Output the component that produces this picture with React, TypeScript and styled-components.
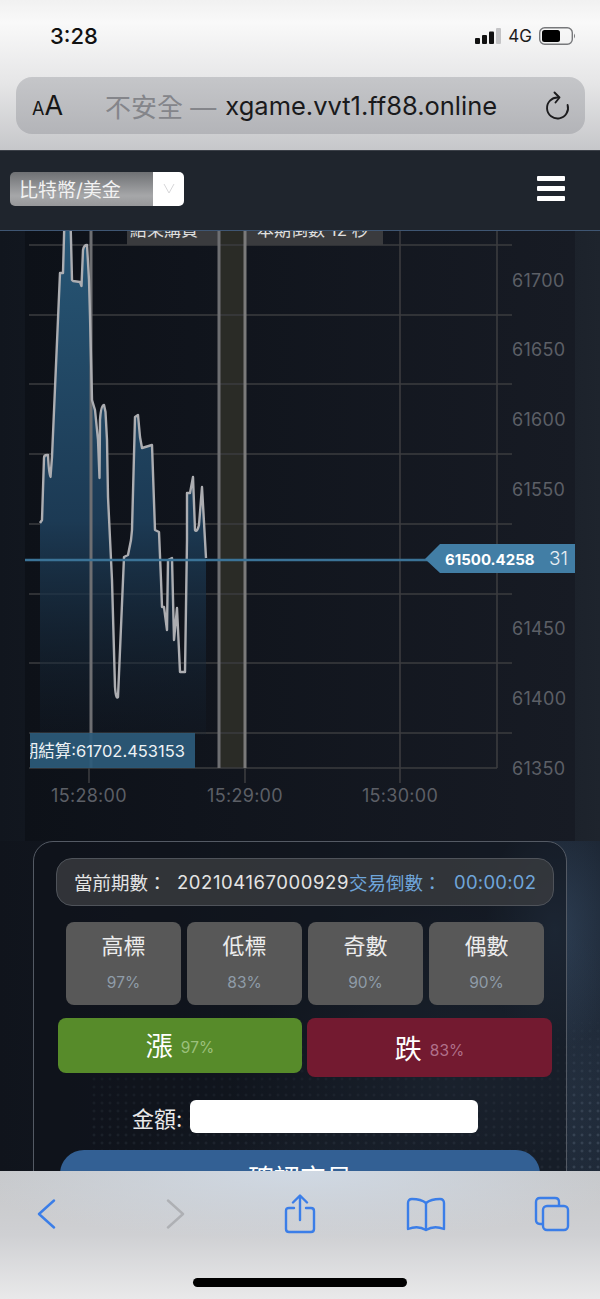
import React from 'react';
import styled, { createGlobalStyle } from 'styled-components';

const FONT = 'Inter, "Noto Sans CJK TC", sans-serif';

const GlobalStyle = createGlobalStyle`
    html, body {
        margin: 0;
        padding: 0;
        background: #14181f;
    }
    * {
        box-sizing: border-box;
    }
`;

const Page = styled.div`
    width: 600px;
    height: 1299px;
    display: flex;
    flex-direction: column;
    overflow: hidden;
    font-family: ${FONT};
`;

/* safari chrome, top */
const BrowserTop = styled.div`
    height: 150px;
    flex-shrink: 0;
    padding: 0 15px 0 16px;
    background: linear-gradient(180deg, #f1f1f1 0%, #f9f9f9 15%, #e6e6e7 55%, #c6c7ca 100%);
`;

const StatusBar = styled.div`
    height: 77px;
    display: flex;
    align-items: flex-start;
    justify-content: space-between;
    padding: 22px 9px 0 34px;
`;

const Clock = styled.div`
    font-size: 22px;
    line-height: 28px;
    font-weight: 500;
    color: #111;
`;

const StatusIcons = styled.div`
    display: flex;
    align-items: center;
    gap: 7px;
    height: 28px;
`;

const NetworkLabel = styled.span`
    font-size: 17px;
    color: #1c1c1c;
`;

const UrlBar = styled.div`
    height: 57px;
    width: 569px;
    border-radius: 16px;
    display: flex;
    align-items: center;
    padding: 0 15px 0 16px;
    background: linear-gradient(180deg, #c5c6c9 0%, #b3b4b8 100%);
`;

const TextSize = styled.div`
    width: 73px;
    display: flex;
    align-items: baseline;
    color: #161616;
    font-size: 27px;
`;

const SmallA = styled.span`
    font-size: 18px;
`;

const Insecure = styled.span`
    font-size: 26px;
    color: #84858a;
    white-space: nowrap;
    margin-right: 9px;
`;

const Host = styled.span`
    flex: 1;
    font-size: 25.5px;
    color: #1a1a1c;
    white-space: nowrap;
`;

const ReloadIcon = styled.svg`
    display: block;
    flex-shrink: 0;
    fill: none;
    stroke: #1c1c1e;
    stroke-width: 1.9;
    stroke-linecap: round;
    stroke-linejoin: round;
`;

/* site header */
const SiteHeader = styled.div`
    height: 81px;
    flex-shrink: 0;
    display: flex;
    align-items: center;
    justify-content: space-between;
    padding: 0 35px 4px 10px;
    background: #1f252d;
    border-top: 1px solid #3b4048;
    border-bottom: 1px solid #3f5673;
`;

const PairSelect = styled.div`
    width: 174px;
    height: 34px;
    display: flex;
    border-radius: 5px;
    overflow: hidden;
`;

const PairName = styled.div`
    flex: 1;
    display: flex;
    align-items: center;
    padding-left: 9px;
    font-size: 19px;
    color: #f2f2f2;
    background: linear-gradient(180deg, #6f7174 0%, #a6a7a9 70%, #97989a 100%);
`;

const PairArrow = styled.div`
    width: 31px;
    display: flex;
    align-items: center;
    justify-content: center;
    background: #fff;
`;

const Burger = styled.div`
    width: 28px;
    display: flex;
    flex-direction: column;
    gap: 5px;
`;

const BurgerBar = styled.span`
    height: 5px;
    border-radius: 1px;
    background: #fff;
`;

/* page body */
const Main = styled.div`
    position: relative;
    flex: 1;
    min-height: 0;
    overflow: hidden;
    background: linear-gradient(90deg, #11161e 0%, #131821 10%, #1a2029 90%, #1e242d 100%);
`;

const GlobeGlow = styled.div`
    position: absolute;
    left: 0;
    right: 0;
    top: 610px;
    bottom: 0;
    background:
        radial-gradient(ellipse 70px 120px at 555px 90px, rgba(62, 86, 114, 0.5), transparent 100%),
        radial-gradient(ellipse 220px 180px at 450px 240px, rgba(60, 78, 100, 0.42), transparent 100%),
        radial-gradient(ellipse 180px 70px at 300px 330px, rgba(52, 66, 84, 0.4), transparent 100%),
        linear-gradient(90deg, #10141c 0%, #141a24 45%, #1d2735 100%);
`;

const GlobeDots = styled.div`
    position: absolute;
    left: 90px;
    right: 0;
    top: 780px;
    bottom: 0;
    opacity: 0.2;
    background-image: radial-gradient(circle, #8a9bb0 1.1px, transparent 1.8px);
    background-size: 8px 8px;
    mask-image: linear-gradient(180deg, transparent 0%, #000 70%);
`;

const ChartFrame = styled.div`
    position: relative;
    height: 610px;
    margin: 0 25px;
    background: linear-gradient(90deg, #0d1118 0%, #10141c 30%, #171b24 100%);
`;

const ChartSvg = styled.svg`
    display: block;
    width: 550px;
    height: 610px;
`;

const AxisLabel = styled.text`
    font-family: ${FONT};
    font-size: 18px;
    letter-spacing: 0.3px;
    fill: #5c5f66;
`;

const PhaseLabel = styled.text`
    font-family: ${FONT};
    font-size: 17px;
    fill: #e0e0e0;
`;

const SettleLabel = styled.text`
    font-family: ${FONT};
    font-size: 16.5px;
    fill: #eef2f5;
`;

const PriceMain = styled.text`
    font-family: ${FONT};
    font-size: 15px;
    font-weight: 700;
    fill: #fff;
`;

const PriceTail = styled.text`
    font-family: ${FONT};
    font-size: 19px;
    font-weight: 300;
    fill: #e8eef3;
`;

/* trade panel */
const TradePanel = styled.div`
    position: relative;
    width: 534px;
    height: 420px;
    margin-left: 33px;
    padding-top: 16px;
    border: 1px solid #545a64;
    border-radius: 20px;
    background: rgba(14, 18, 26, 0.55);
`;

const RoundInfo = styled.div`
    width: 498px;
    height: 48px;
    margin-left: 22px;
    padding-left: 17px;
    display: flex;
    align-items: center;
    white-space: nowrap;
    font-size: 18.5px;
    border: 1px solid #4f535a;
    border-radius: 16px;
    background: rgba(58, 60, 64, 0.8);
`;

const RoundLabel = styled.span<{ $accent?: boolean }>`
    width: ${(p) => (p.$accent ? '105px' : '103px')};
    flex-shrink: 0;
    color: ${(p) => (p.$accent ? '#6fa5da' : '#e4e4e4')};
`;

const RoundValue = styled.span<{ $accent?: boolean }>`
    letter-spacing: ${(p) => (p.$accent ? '0.25px' : '0.57px')};
    color: ${(p) => (p.$accent ? '#6fa5da' : '#e4e4e4')};
`;

const OptionGrid = styled.div`
    display: grid;
    grid-template-columns: repeat(4, 115px);
    gap: 6px;
    width: 478px;
    margin: 16px 0 0 32px;
`;

const OptionCard = styled.div`
    height: 83px;
    padding-top: 9px;
    text-align: center;
    border-radius: 8px;
    background: #585858;
`;

const OptionName = styled.div`
    font-size: 22px;
    line-height: 30px;
    color: #ececec;
`;

const OptionRate = styled.div`
    margin-top: 12px;
    font-size: 15.5px;
    line-height: 20px;
    color: #8f9ca8;
`;

const DirectionRow = styled.div`
    display: grid;
    grid-template-columns: 244px 245px;
    align-items: start;
    gap: 5px;
    margin: 13px 0 0 24px;
`;

const DirectionButton = styled.div<{ $up?: boolean }>`
    height: ${(p) => (p.$up ? '55px' : '59px')};
    display: flex;
    align-items: center;
    justify-content: center;
    gap: 8px;
    padding-bottom: ${(p) => (p.$up ? '3px' : '0')};
    border-radius: 8px;
    color: #fff;
    font-size: 27px;
    background: ${(p) => (p.$up ? '#578b2a' : '#731a30')};
`;

const DirectionRate = styled.span<{ $up?: boolean }>`
    font-size: 15.5px;
    margin-top: 6px;
    color: ${(p) => (p.$up ? '#9cc07c' : '#b0708a')};
`;

const AmountRow = styled.div`
    display: flex;
    align-items: center;
    gap: 7px;
    margin: 23px 0 0 98px;
`;

const AmountLabel = styled.label`
    width: 51px;
    white-space: nowrap;
    font-size: 22px;
    color: #eaeaea;
`;

const AmountInput = styled.div`
    width: 288px;
    height: 33px;
    border-radius: 6px;
    background: #fff;
`;

const ConfirmButton = styled.div`
    width: 480px;
    height: 60px;
    margin: 17px 0 0 26px;
    padding-top: 9px;
    text-align: center;
    font-size: 26px;
    line-height: 40px;
    color: #fff;
    border-radius: 24px;
    background: #336094;
`;

/* safari chrome, bottom */
const BrowserBottom = styled.div`
    height: 128px;
    flex-shrink: 0;
    display: flex;
    flex-direction: column;
    background:
        radial-gradient(ellipse 340px 70px at 300px 0px, #d0d9e4 0%, rgba(208, 217, 228, 0) 100%),
        linear-gradient(180deg, #c6c7c9 0%, #cfd0d3 50%, #e9e9ea 100%);
`;

const ToolRow = styled.div`
    height: 107px;
    display: grid;
    grid-template-columns: 129px 125px 126px 126px 36px;
    align-items: start;
    padding: 23px 0 0 28px;
`;

const ToolSlot = styled.div`
    width: 36px;
    height: 40px;
    display: flex;
    align-items: center;
    justify-content: center;
`;

const ToolIcon = styled.svg<{ $muted?: boolean }>`
    display: block;
    flex-shrink: 0;
    fill: none;
    stroke: ${(p) => (p.$muted ? '#aeb0b4' : '#3b7ee8')};
    stroke-width: 2.4;
    stroke-linecap: round;
    stroke-linejoin: round;
`;

const HomeIndicator = styled.div`
    width: 214px;
    height: 9px;
    margin: 0 auto;
    border-radius: 5px;
    background: #000;
`;

const GRID_ROWS = [245, 315, 384, 454, 524, 594, 663, 733];
const PRICE_LABELS = [
    { y: 287, text: '61700' },
    { y: 356, text: '61650' },
    { y: 426, text: '61600' },
    { y: 496, text: '61550' },
    { y: 635, text: '61450' },
    { y: 705, text: '61400' },
    { y: 775, text: '61350' },
];
const TIME_LABELS = [
    { x: 89, text: '15:28:00' },
    { x: 245, text: '15:29:00' },
    { x: 400, text: '15:30:00' },
];

const PRICE_LINE =
    'M40 523 L42 520 L44 458 Q44 455 47 455 L48 455 Q49 477 50.5 477 L52 457 L60 273 L63 273 L65 200 L70 200 L72 280 L73 281 L80 282 L81.5 286 L83 250 Q84 245 87 245 L89 280 L90 316 L92 400 L95 410 L98 440 L99.5 478 L100 420 Q101 405 104 405 L105.5 412 L107 440 L108 497 L112 580 L115 687 Q116 700 118 697 L124 557 L128 555 L131 540 L132 530 L135 417 L138 415 L140 437 L142 448 L152 445 L155 530 L159 532 L161 580 L162 607 L164 607 L167 630 L168 560 L172 558 L174 640 L177 608 L180 672 L185 672 L187 540 L187 493 L190 493 L193 477 L195 530 Q197 533 199 525 L202 487 L206 558';

const phaseLabels = [
    { x: 130, text: '結束購買' },
    { x: 257, text: '本期倒數 12 秒' },
];

const PriceChart = () => (
    <ChartSvg viewBox="25 231 550 610">
        <defs>
            <linearGradient id="areaFill" x1="0" y1="0" x2="0" y2="1">
                <stop offset="0" stopColor="#285878" />
                <stop offset="0.6" stopColor="#1c3a54" />
                <stop offset="1" stopColor="#14202e" stopOpacity="0.2" />
            </linearGradient>
            <clipPath id="settleClip">
                <rect x="30" y="733" width="165" height="35" />
            </clipPath>
        </defs>

        <rect x="219" y="231" width="26" height="537" fill="#2a2b26" />
        <rect x="127" y="231" width="92" height="14" fill="#3a3b3e" />
        <rect x="245" y="231" width="138" height="14" fill="#3a3b3e" />
        {phaseLabels.map((l) => (
            <PhaseLabel key={l.x} x={l.x} y={236}>
                {l.text}
            </PhaseLabel>
        ))}

        {GRID_ROWS.map((y) => (
            <line key={y} x1="29" x2="512" y1={y} y2={y} stroke="#3b3c3f" strokeWidth="1.6" />
        ))}
        <line x1="29" x2="497" y1="768" y2="768" stroke="#3b3c3f" strokeWidth="1.6" />
        <line x1="400" x2="400" y1="231" y2="783" stroke="#3b3c3f" strokeWidth="1.6" />
        <line x1="497" x2="497" y1="231" y2="768" stroke="#3b3c3f" strokeWidth="1.6" />
        <line x1="89" x2="89" y1="768" y2="783" stroke="#3b3c3f" strokeWidth="1.6" />
        <line x1="245" x2="245" y1="768" y2="783" stroke="#3b3c3f" strokeWidth="1.6" />

        <path d={`${PRICE_LINE} L206 735 L40 735 Z`} fill="url(#areaFill)" />

        <line x1="91" x2="91" y1="231" y2="768" stroke="#6e6f72" strokeWidth="3" />
        <line x1="219" x2="219" y1="231" y2="768" stroke="#6e6f72" strokeWidth="3" />
        <line x1="245" x2="245" y1="231" y2="768" stroke="#7a7a7a" strokeWidth="3" />

        <rect x="30" y="733" width="165" height="35" fill="#2c5a7a" fillOpacity="0.93" />
        <g clipPath="url(#settleClip)">
            <SettleLabel x="185" y="757" textAnchor="end">
                期結算:61702.453153
            </SettleLabel>
        </g>

        <path d={PRICE_LINE} fill="none" stroke="#acadb1" strokeWidth="2.4" strokeLinejoin="round" />

        <line x1="25" x2="428" y1="560" y2="560" stroke="#3b7397" strokeWidth="2.4" />
        <polygon points="425,559 440,544 575,544 575,573 440,573" fill="#427ea5" />
        <PriceMain x="445" y="565">
            61500.4258
        </PriceMain>
        <PriceTail x="549" y="565">
            31
        </PriceTail>

        {PRICE_LABELS.map((l) => (
            <AxisLabel key={l.text} x="512" y={l.y}>
                {l.text}
            </AxisLabel>
        ))}
        {TIME_LABELS.map((l) => (
            <AxisLabel key={l.text} x={l.x} y="802" textAnchor="middle">
                {l.text}
            </AxisLabel>
        ))}
    </ChartSvg>
);

const OPTIONS = [
    { name: '高標', rate: '97%' },
    { name: '低標', rate: '83%' },
    { name: '奇數', rate: '90%' },
    { name: '偶數', rate: '90%' },
];

const App = () => (
    <Page>
        <GlobalStyle />
        <BrowserTop>
            <StatusBar>
                <Clock>3:28</Clock>
                <StatusIcons>
                    <svg width="26" height="16" viewBox="0 0 26 16">
                        <rect x="0" y="10" width="5" height="6" rx="1" fill="#111" />
                        <rect x="7" y="7" width="5" height="9" rx="1" fill="#111" />
                        <rect x="14" y="3.5" width="5" height="12.5" rx="1" fill="#111" />
                        <rect x="21" y="0" width="5" height="16" rx="1" fill="#c4c4c6" />
                    </svg>
                    <NetworkLabel>4G</NetworkLabel>
                    <svg width="37" height="18" viewBox="0 0 37 18">
                        <rect x="0.7" y="0.7" width="32.6" height="16.6" rx="5" fill="none" stroke="#77787b" strokeWidth="1.4" />
                        <rect x="3" y="3" width="18" height="12" rx="2.5" fill="#000" />
                        <path d="M35 6.5 Q37 9 35 11.5 Z" fill="#77787b" />
                    </svg>
                </StatusIcons>
            </StatusBar>
            <UrlBar>
                <TextSize>
                    <SmallA>A</SmallA>A
                </TextSize>
                <Insecure>不安全 —</Insecure>
                <Host>xgame.vvt1.ff88.online</Host>
                <ReloadIcon width="26" height="30" viewBox="0 0 26 30">
                    <path d="M14 6.5 A10.5 10.5 0 1 0 23.6 14" />
                    <path d="M10.5 1.5 L15.5 6.5 L11.5 11.5" />
                </ReloadIcon>
            </UrlBar>
        </BrowserTop>

        <SiteHeader>
            <PairSelect>
                <PairName>比特幣/美金</PairName>
                <PairArrow>
                    <svg width="12" height="11" viewBox="0 0 12 11" fill="none" stroke="#d6d6d8" strokeWidth="1">
                        <path d="M1 1 L6 10 L11 1" />
                    </svg>
                </PairArrow>
            </PairSelect>
            <Burger>
                <BurgerBar />
                <BurgerBar />
                <BurgerBar />
            </Burger>
        </SiteHeader>

        <Main>
            <GlobeGlow />
            <GlobeDots />
            <ChartFrame>
                <PriceChart />
            </ChartFrame>
            <TradePanel>
                <RoundInfo>
                    <RoundLabel>當前期數：</RoundLabel>
                    <RoundValue>202104167000929</RoundValue>
                    <RoundLabel $accent>交易倒數：</RoundLabel>
                    <RoundValue $accent>00:00:02</RoundValue>
                </RoundInfo>
                <OptionGrid>
                    {OPTIONS.map((o) => (
                        <OptionCard key={o.name}>
                            <OptionName>{o.name}</OptionName>
                            <OptionRate>{o.rate}</OptionRate>
                        </OptionCard>
                    ))}
                </OptionGrid>
                <DirectionRow>
                    <DirectionButton $up>
                        漲<DirectionRate $up>97%</DirectionRate>
                    </DirectionButton>
                    <DirectionButton>
                        跌<DirectionRate>83%</DirectionRate>
                    </DirectionButton>
                </DirectionRow>
                <AmountRow>
                    <AmountLabel>金額:</AmountLabel>
                    <AmountInput />
                </AmountRow>
                <ConfirmButton>確認交易</ConfirmButton>
            </TradePanel>
        </Main>

        <BrowserBottom>
            <ToolRow>
                <ToolSlot>
                    <ToolIcon width="19" height="30" viewBox="0 0 19 30">
                        <path d="M17 1.5 L2 15 L17 28.5" />
                    </ToolIcon>
                </ToolSlot>
                <ToolSlot>
                    <ToolIcon $muted width="19" height="30" viewBox="0 0 19 30">
                        <path d="M2 1.5 L17 15 L2 28.5" />
                    </ToolIcon>
                </ToolSlot>
                <ToolSlot>
                    <ToolIcon width="32" height="40" viewBox="0 0 32 40">
                        <path d="M10 14 H5 Q2 14 2 17 V35 Q2 38 5 38 H27 Q30 38 30 35 V17 Q30 14 27 14 H22" />
                        <path d="M16 26 V2 M9 8.5 L16 1.5 L23 8.5" />
                    </ToolIcon>
                </ToolSlot>
                <ToolSlot>
                    <ToolIcon width="40" height="35" viewBox="0 0 40 35">
                        <path d="M20 6 Q15 2 6 2 Q2 2 2 6 V32 Q12 28 20 33 Q28 28 38 32 V6 Q38 2 34 2 Q25 2 20 6 Z" />
                        <path d="M20 6 V32" />
                    </ToolIcon>
                </ToolSlot>
                <ToolSlot>
                    <ToolIcon width="36" height="36" viewBox="0 0 36 36">
                        <path d="M8 28 H6 Q2 28 2 24 V6 Q2 2 6 2 H21 Q25 2 25 6 V9" />
                        <rect x="9" y="10" width="25" height="24" rx="4" />
                    </ToolIcon>
                </ToolSlot>
            </ToolRow>
            <HomeIndicator />
        </BrowserBottom>
    </Page>
);

export default App;
